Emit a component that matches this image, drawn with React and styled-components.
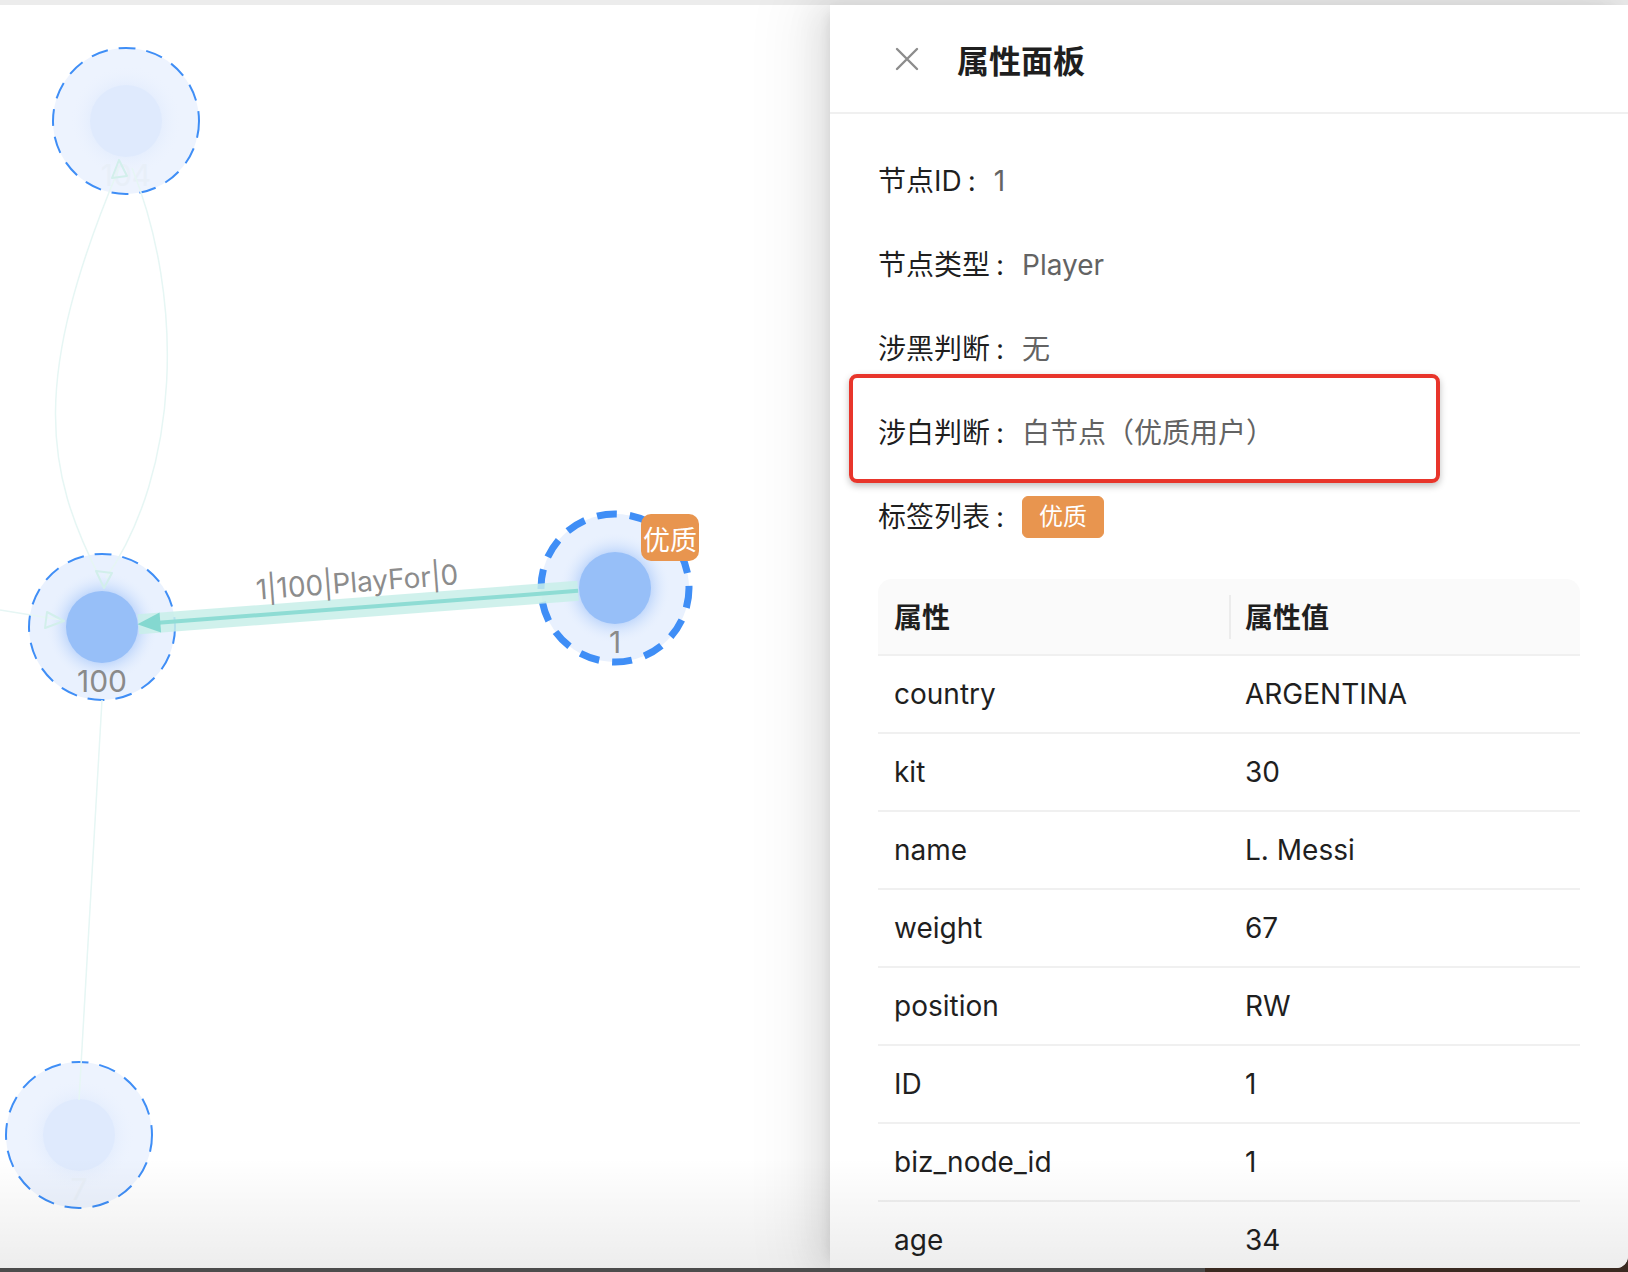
import React from "react";
import styled, { createGlobalStyle } from "styled-components";

const GlobalStyle = createGlobalStyle`
  html, body {
    margin: 0;
    padding: 0;
    background: linear-gradient(to right, #4c4c4c 74%, #3a2a21 74%);
  }
  body {
    font-family: Inter, "Noto Sans CJK SC", sans-serif;
  }
  #root {
    width: 1628px;
    height: 1272px;
  }
`;

const Window = styled.div`
  position: relative;
  width: 1628px;
  height: 1268px;
  background: #fff;
  border-bottom-right-radius: 12px;
  overflow: hidden;
  display: flex;
  flex-direction: column;

  &::after {
    content: "";
    position: absolute;
    left: 0;
    right: 0;
    bottom: 0;
    height: 110px;
    background: linear-gradient(to top, rgba(0, 0, 0, 0.07), rgba(0, 0, 0, 0));
    pointer-events: none;
    z-index: 2;
  }
`;

const TopStrip = styled.div`
  flex: none;
  height: 5px;
  background: #ececec;
`;

const Main = styled.div`
  flex: 1;
  display: flex;
  min-height: 0;
`;

const Canvas = styled.div`
  flex: 1;
  background: #fff;

  svg {
    display: block;
  }
`;

const Panel = styled.aside`
  position: relative;
  z-index: 1;
  flex: none;
  width: 798px;
  display: flex;
  flex-direction: column;
  background: #fff;
  overflow: hidden;
  box-shadow: -12px 0 32px 0 rgba(0, 0, 0, 0.08), -6px 0 12px -8px rgba(0, 0, 0, 0.12),
    -18px 0 56px 16px rgba(0, 0, 0, 0.05);
`;

const PanelHeader = styled.header`
  flex: none;
  height: 109px;
  box-sizing: border-box;
  border-bottom: 2px solid #f0f0f0;
  display: flex;
  align-items: center;
  gap: 38px;
  padding: 0 48px 0 65px;
`;

const CloseButton = styled.button`
  border: 0;
  background: none;
  padding: 0;
  width: 24px;
  height: 24px;
  display: flex;
  cursor: pointer;
`;

const Title = styled.h2`
  margin: 0;
  font-family: "Noto Sans CJK SC", sans-serif;
  font-size: 32px;
  font-weight: 600;
  line-height: 1;
  color: #1f1f1f;
`;

const PanelBody = styled.div`
  flex: 1;
  padding: 45px 48px 0;
  font-size: 28px;
`;

const Item = styled.div`
  position: relative;
  display: flex;
  align-items: center;
  line-height: 44px;
  padding-bottom: 40px;

  &:last-child {
    padding-bottom: 36px;
  }
`;

const Label = styled.span`
  color: rgba(0, 0, 0, 0.88);

  &::after {
    content: ":";
    margin: 0 18px 0 6px;
  }
`;

const Value = styled.span`
  color: #636363;
`;

const Highlight = styled.div`
  position: absolute;
  left: -29px;
  top: -37px;
  width: 591px;
  height: 109px;
  box-sizing: border-box;
  border: 4px solid #e8352b;
  border-radius: 8px;
  box-shadow: 0 3px 7px rgba(0, 0, 0, 0.25);
  pointer-events: none;
`;

const Tag = styled.span`
  display: inline-block;
  padding: 0 16px;
  line-height: 40px;
  font-size: 24px;
  color: #fff;
  background: #e8954f;
  border: 1px solid #e8954f;
  border-radius: 6px;
`;

const Table = styled.table`
  width: 100%;
  table-layout: fixed;
  border-collapse: separate;
  border-spacing: 0;
  font-size: 28px;
  line-height: 44px;
  color: #1f1f1f;
`;

const Th = styled.th`
  position: relative;
  text-align: left;
  font-weight: 600;
  font-family: "Noto Sans CJK SC", sans-serif;
  padding: 15px 16px 16px;
  background: #fafafa;
  border-bottom: 2px solid #f0f0f0;

  &:first-child {
    border-top-left-radius: 14px;
  }
  &:last-child {
    border-top-right-radius: 14px;
  }
  & + &::before {
    content: "";
    position: absolute;
    left: 0;
    top: 50%;
    width: 2px;
    height: 44px;
    transform: translateY(-50%);
    background: #ececec;
  }
`;

const Td = styled.td`
  padding: 16px;
  border-bottom: 2px solid #f0f0f0;
`;

const nodes = [
  { id: "104", x: 126, y: 121, faded: true },
  { id: "100", x: 102, y: 627 },
  { id: "1", x: 615, y: 588, selected: true },
  { id: "7", x: 79, y: 1135, faded: true },
];

const props = [
  ["country", "ARGENTINA"],
  ["kit", "30"],
  ["name", "L. Messi"],
  ["weight", "67"],
  ["position", "RW"],
  ["ID", "1"],
  ["biz_node_id", "1"],
  ["age", "34"],
];

const GraphNode = ({ id, x, y, faded, selected }) => (
  <g>
    <circle
      cx={x}
      cy={y}
      r={selected ? 74 : 73}
      fill={faded ? "#edf3fe" : "#e9f1fe"}
      stroke="#3f8ef6"
      strokeWidth={selected ? 7 : 2}
      strokeDasharray={selected ? "20 13" : "17 11"}
    />
    <circle cx={x} cy={y} r={56} fill={faded ? "url(#glowFaded)" : "url(#glow)"} />
    <circle cx={x} cy={y} r={36} fill={faded ? "#dfeafd" : "#97bff8"} />
    <text
      x={x}
      y={y + 54}
      textAnchor="middle"
      dominantBaseline="central"
      fontSize="30"
      fontFamily="Inter, sans-serif"
      fill={faded ? "#e8eff8" : "#8a8a8a"}
    >
      {id}
    </text>
  </g>
);

const Graph = () => (
  <svg width="830" height="1263" viewBox="0 5 830 1263">
    <defs>
      <radialGradient id="glow">
        <stop offset="0.6" stopColor="#b0cdfa" stopOpacity="0.8" />
        <stop offset="1" stopColor="#e9f1fe" stopOpacity="0" />
      </radialGradient>
      <radialGradient id="glowFaded">
        <stop offset="0.6" stopColor="#e2ecfd" stopOpacity="0.8" />
        <stop offset="1" stopColor="#edf3fe" stopOpacity="0" />
      </radialGradient>
    </defs>

    {nodes.map((n) => (
      <GraphNode key={n.id} {...n} />
    ))}

    <g fill="none" stroke="#e6f6f4" strokeWidth="1.5">
      <path d="M119 168 C 30 380, 45 470, 100 578" />
      <path d="M132 168 C 185 300, 180 470, 106 578" />
      <path d="M0 610 L 62 620" />
      <path d="M102 700 L 79 1100" />
    </g>
    <g fill="none" stroke="#d2efeb" strokeWidth="2" strokeLinejoin="round">
      <polygon points="104,588 96,571 112,573" />
      <polygon points="119,160 112,178 127,176" />
      <polygon points="64,621 47,612 45,628" />
    </g>

    <g transform="translate(615 588) rotate(175.65)">
      <rect x="37" y="-10" width="441" height="20" fill="#c8efe9" opacity="0.85" />
      <line x1="37" y1="0" x2="458" y2="0" stroke="#8edcd4" strokeWidth="4" />
      <polygon points="479,0 456,-10 456,10" fill="#84d8d0" />
    </g>
    <text
      x="357"
      y="582"
      textAnchor="middle"
      dominantBaseline="central"
      transform="rotate(-4.35 357 582)"
      fontSize="28"
      fontFamily="Inter, sans-serif"
      fill="#8c8c8c"
    >
      1|100|PlayFor|0
    </text>

    <rect x="641" y="514" width="58" height="47" rx="10" fill="#e8954f" />
    <text
      x="670"
      y="538"
      textAnchor="middle"
      dominantBaseline="central"
      fontSize="27"
      fontFamily="'Noto Sans CJK SC', sans-serif"
      fill="#fff"
    >
      优质
    </text>
  </svg>
);

const App = () => {
  return (
    <Window>
      <GlobalStyle />
      <TopStrip />
      <Main>
        <Canvas>
          <Graph />
        </Canvas>
        <Panel>
          <PanelHeader>
            <CloseButton aria-label="close">
              <svg width="24" height="24" viewBox="0 0 24 24">
                <path d="M2 2 L22 22 M22 2 L2 22" stroke="#8c8c8c" strokeWidth="2.4" strokeLinecap="round" />
              </svg>
            </CloseButton>
            <Title>属性面板</Title>
          </PanelHeader>
          <PanelBody>
            <Item>
              <Label>节点ID</Label>
              <Value>1</Value>
            </Item>
            <Item>
              <Label>节点类型</Label>
              <Value>Player</Value>
            </Item>
            <Item>
              <Label>涉黑判断</Label>
              <Value>无</Value>
            </Item>
            <Item>
              <Label>涉白判断</Label>
              <Value>白节点（优质用户）</Value>
              <Highlight />
            </Item>
            <Item>
              <Label>标签列表</Label>
              <Tag>优质</Tag>
            </Item>
            <Table>
              <thead>
                <tr>
                  <Th>属性</Th>
                  <Th>属性值</Th>
                </tr>
              </thead>
              <tbody>
                {props.map(([k, v]) => (
                  <tr key={k}>
                    <Td>{k}</Td>
                    <Td>{v}</Td>
                  </tr>
                ))}
              </tbody>
            </Table>
          </PanelBody>
        </Panel>
      </Main>
    </Window>
  );
};

export default App;
